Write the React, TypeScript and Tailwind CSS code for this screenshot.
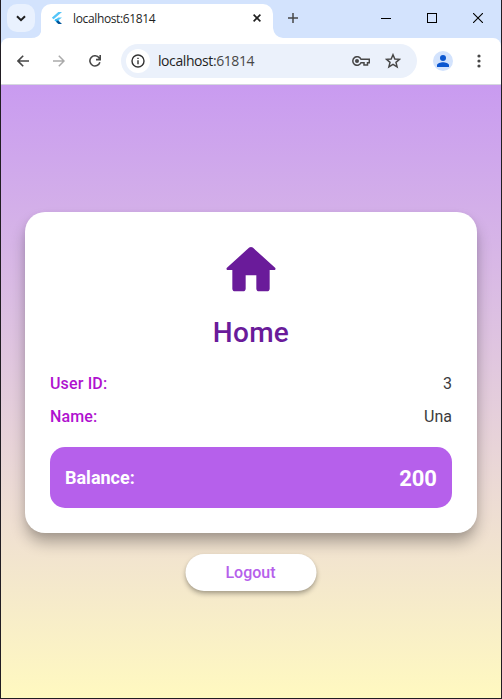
import type { ReactNode } from 'react';

function TitleBar() {
  return (
    <div className="flex h-[38px] items-start bg-[#d3e3fd]">
      <div className="flex h-[38px] w-[40px] flex-col">
        <div className="ml-1.5 mt-1 flex h-7 w-7 items-center justify-center rounded-[10px] bg-[#e9f1fe]">
          <svg width="10" height="7" viewBox="0 0 10 7" fill="none" stroke="#1f1f1f" strokeWidth="2">
            <path d="M1 1.2L5 5.2L9 1.2" />
          </svg>
        </div>
        <svg className="mt-auto self-end" width="10" height="6" viewBox="0 0 10 6" fill="#fff">
          <path d="M10 0V6H0Q8 6 10 0Z" />
        </svg>
      </div>
      <div className="mt-1 flex h-[34px] w-[232px] items-start rounded-t-[10px] bg-white pl-[10px] pr-[12px]">
        <svg className="mt-[8px]" width="12" height="12" viewBox="0 0 12 12">
          <path d="M7.3 0H11L2.6 7.3L.8 5.7Z" fill="#54c5f8" />
          <path d="M7.3 5.5H11L6.5 9L4 8Z" fill="#54c5f8" />
          <path d="M3.3 8.2L5.2 6.7L8 9L5.8 10.3Z" fill="#29b6f6" />
          <path d="M5 9.8L7.1 8.2L11 12H7.3Z" fill="#01579b" />
        </svg>
        <span className="ml-[10px] mt-[6px] flex-1 text-[12px] leading-[17px] tracking-[-0.36px] text-[#1f1f1f]">localhost:61814</span>
        <svg className="mt-[10px]" width="8" height="8" viewBox="0 0 8 8" stroke="#1f1f1f" strokeWidth="1.6">
          <path d="M.6 .6L7.4 7.4M7.4 .6L.6 7.4" />
        </svg>
      </div>
      <svg className="self-end" width="10" height="10" viewBox="0 0 10 10" fill="#fff">
        <path d="M0 0Q1 9 10 10H0Z" />
      </svg>
      <svg className="ml-[5px] mt-[13px]" width="10" height="10" viewBox="0 0 10 10" stroke="#474747" strokeWidth="1.5">
        <path d="M5 0V10M0 5H10" />
      </svg>
      <div className="ml-auto mr-[18px] mt-[13px] flex gap-9 text-black">
        <svg width="10" height="10" viewBox="0 0 10 10" stroke="currentColor"><path d="M0 5.5H10" /></svg>
        <svg width="10" height="10" viewBox="0 0 10 10" fill="none" stroke="currentColor"><rect x=".5" y=".5" width="9" height="9" /></svg>
        <svg width="10" height="10" viewBox="0 0 10 10" stroke="currentColor" strokeWidth="1.1"><path d="M0 0L10 10M10 0L0 10" /></svg>
      </div>
    </div>
  );
}

function Toolbar() {
  return (
    <div className="bg-[#d3e3fd]">
      <div className="flex h-[47px] items-center rounded-t-[8px] border-b border-[#d5d8de] bg-white pl-[16px] pr-[20px]">
        <svg width="12" height="12" viewBox="0 0 12 12" fill="none" stroke="#474747" strokeWidth="1.6">
          <path d="M12 6H1.2M6.2 .8L1 6L6.2 11.2" />
        </svg>
        <svg className="ml-6" width="12" height="12" viewBox="0 0 12 12" fill="none" stroke="#aaa" strokeWidth="1.5">
          <path d="M0 6H10.8M5.8 .8L11 6L5.8 11.2" />
        </svg>
        <svg className="ml-6" width="12" height="12" viewBox="0 0 12 12" fill="none" stroke="#474747" strokeWidth="1.6">
          <path d="M10.9 7.3A5.1 5.1 0 1 1 10.2 3L11 4.5M11.2 0V4.6H7" />
        </svg>
        <div className="ml-[20px] flex h-[34px] w-[296px] items-center rounded-full bg-[#ebf1fb] pl-[5px] pr-[16px]">
          <div className="flex h-6 w-6 items-center justify-center rounded-full bg-white">
            <svg width="14" height="14" viewBox="0 0 14 14" fill="none" stroke="#333" strokeWidth="1.4">
              <circle cx="7" cy="7" r="6" />
              <path d="M7 6.3V10.3M7 3.7V5.1" />
            </svg>
          </div>
          <span className="ml-[8px] flex-1 text-[14px] leading-5 tracking-[-0.42px] text-[#474747]">
            <span className="text-[#1f1f1f]">localhost</span>:61814
          </span>
          <svg width="18" height="10" viewBox="0 0 18 10" fill="none" stroke="#474747" strokeWidth="1.5">
            <path d="M9 3.2A4.3 4.3 0 1 0 9 6.8H12V9H15.5V6.8H17.3V3.2Z" />
            <circle cx="5" cy="5" r="2" fill="#474747" stroke="none" />
          </svg>
          <svg className="ml-[15px]" width="16" height="16" viewBox="0 0 14 14" fill="none" stroke="#474747" strokeWidth="1.3">
            <path d="M7 1.5L8.6 5.2L12.7 5.5L9.6 8.2L10.6 12.2L7 10L3.4 12.2L4.4 8.2L1.3 5.5L5.4 5.2Z" />
          </svg>
        </div>
        <div className="ml-[16px] flex h-5 w-5 items-center justify-center rounded-full bg-[#d3e3fd]">
          <svg width="12" height="12" viewBox="0 0 12 12" fill="#0b57d0">
            <circle cx="6" cy="3" r="3" />
            <path d="M0 12V10.1C0 8.3 3.8 7.2 6 7.2S12 8.3 12 10.1V12Z" />
          </svg>
        </div>
        <svg className="ml-auto" width="4" height="14" viewBox="0 0 4 14" fill="#474747">
          <circle cx="2" cy="2" r="1.6" /><circle cx="2" cy="7" r="1.6" /><circle cx="2" cy="12" r="1.6" />
        </svg>
      </div>
    </div>
  );
}

function InfoRow({ label, children }: { label: string; children: ReactNode }) {
  return (
    <div className="flex h-[33px] items-center justify-between text-[16px]">
      <span className="font-medium tracking-[0.15px] text-[#b012cf]">{label}</span>
      <span className="text-[#3b3b3d]">{children}</span>
    </div>
  );
}

export default function App() {
  return (
    <div className="h-[699px] w-[502px] bg-[#211d23] px-px pb-px font-['Roboto',sans-serif]">
      <div className="flex h-[698px] flex-col overflow-hidden">
        <div className="font-['Open_Sans','Noto_Sans',sans-serif]">
          <TitleBar />
          <Toolbar />
        </div>
        <main className="flex flex-1 flex-col items-center bg-linear-to-b from-[#c99bf0] to-[#fff9c0] pt-[127px]">
          <section className="flex h-[321px] w-[452px] flex-col rounded-[20px] bg-white px-[25px] pt-[25px] shadow-[0_10px_15px_-1px_rgba(0,0,0,0.3),0_2px_6px_0_rgba(0,0,0,0.06)]">
            <svg className="mx-auto mt-px" width="64" height="64" viewBox="0 0 24 24" fill="#6a1b9a">
              <path d="M10 19v-5h4v5c0 .55.45 1 1 1h3c.55 0 1-.45 1-1v-7h1.7c.46 0 .68-.57.33-.87L12.67 3.6c-.38-.34-.96-.34-1.34 0l-8.36 7.53c-.34.3-.13.87.33.87H5v7c0 .55.45 1 1 1h3c.55 0 1-.45 1-1z" />
            </svg>
            <h1 className="mt-[11px] text-center text-[28px] font-medium leading-[40px] tracking-[0.3px] text-[#6a1b9a]">Home</h1>
            <div className="mt-[14px]">
              <InfoRow label="User ID:">3</InfoRow>
              <InfoRow label="Name:">Una</InfoRow>
            </div>
            <div className="mt-[14px] flex h-[61px] items-center justify-between rounded-[15px] bg-[#b660eb] px-[15px] font-bold text-white">
              <span className="text-[18px]">Balance:</span>
              <span className="pt-0.5 text-[22px]">200</span>
            </div>
          </section>
          <button className="mt-[20.5px] flex h-[37px] w-[131px] -translate-x-[0.5px] items-center justify-center rounded-full bg-white pt-px text-[16px] font-medium text-[#b660eb] shadow-[0_3px_5px_0_rgba(0,0,0,0.28),0_1px_3px_0_rgba(0,0,0,0.08)]">
            Logout
          </button>
        </main>
      </div>
    </div>
  );
}
